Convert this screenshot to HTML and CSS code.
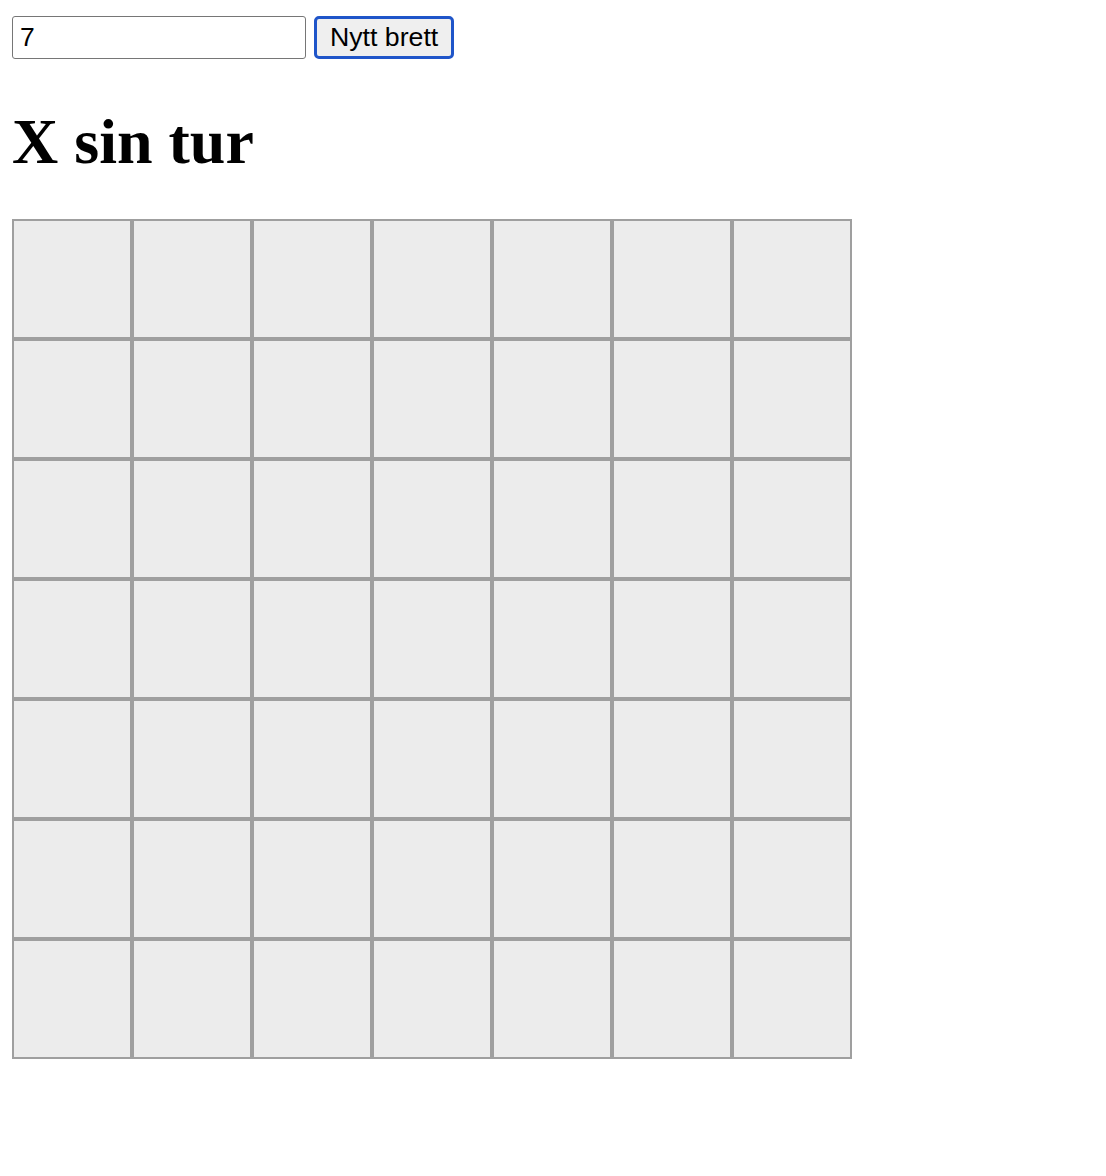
FILE: index.html
```html
<!DOCTYPE html>
<html>
<head>
<meta charset="utf-8">
<link rel="stylesheet" href="styles.css">
</head>
<body>
<div class="app">
  <div class="controls">
    <input class="size-input" type="text" value="7">
    <button class="new-btn">Nytt brett</button>
  </div>
  <h1 class="status">X sin tur</h1>
  <div class="board">
    <div class="cell"></div><div class="cell"></div><div class="cell"></div><div class="cell"></div><div class="cell"></div><div class="cell"></div><div class="cell"></div>
    <div class="cell"></div><div class="cell"></div><div class="cell"></div><div class="cell"></div><div class="cell"></div><div class="cell"></div><div class="cell"></div>
    <div class="cell"></div><div class="cell"></div><div class="cell"></div><div class="cell"></div><div class="cell"></div><div class="cell"></div><div class="cell"></div>
    <div class="cell"></div><div class="cell"></div><div class="cell"></div><div class="cell"></div><div class="cell"></div><div class="cell"></div><div class="cell"></div>
    <div class="cell"></div><div class="cell"></div><div class="cell"></div><div class="cell"></div><div class="cell"></div><div class="cell"></div><div class="cell"></div>
    <div class="cell"></div><div class="cell"></div><div class="cell"></div><div class="cell"></div><div class="cell"></div><div class="cell"></div><div class="cell"></div>
    <div class="cell"></div><div class="cell"></div><div class="cell"></div><div class="cell"></div><div class="cell"></div><div class="cell"></div><div class="cell"></div>
  </div>
</div>
</body>
</html>
```
FILE: styles.css
```css
html, body {
  margin: 0;
  padding: 0;
  background: #fff;
}
.app {
  padding: 16px 12px;
  font-family: "Liberation Serif", "Times New Roman", serif;
}
.controls {
  display: flex;
  gap: 8px;
  align-items: center;
  height: 43px;
}
.size-input {
  box-sizing: border-box;
  width: 294px;
  height: 43px;
  margin: 0;
  padding: 0 7px;
  font-family: "Liberation Sans", Arial, sans-serif;
  font-size: 26.5px;
  color: #000;
  border: 1px solid #767676;
  border-radius: 3px;
  background: #fff;
}
.new-btn {
  box-sizing: border-box;
  height: 43px;
  margin: 0;
  padding: 0 13px 0 13px;
  font-family: "Liberation Sans", Arial, sans-serif;
  font-size: 26.7px;
  color: #000;
  background: #efefef;
  border: 3px solid #1f55c9;
  border-radius: 5px;
}
.status {
  margin: 46px 0 0;
  font-size: 64px;
  line-height: 74px;
  font-weight: bold;
}
.board {
  margin-top: 40px;
  display: grid;
  grid-template-columns: repeat(7, 120px);
  grid-auto-rows: 120px;
  width: 840px;
}
.cell {
  box-sizing: border-box;
  border: 2px solid #9f9f9f;
  background: #ececec;
}
```
